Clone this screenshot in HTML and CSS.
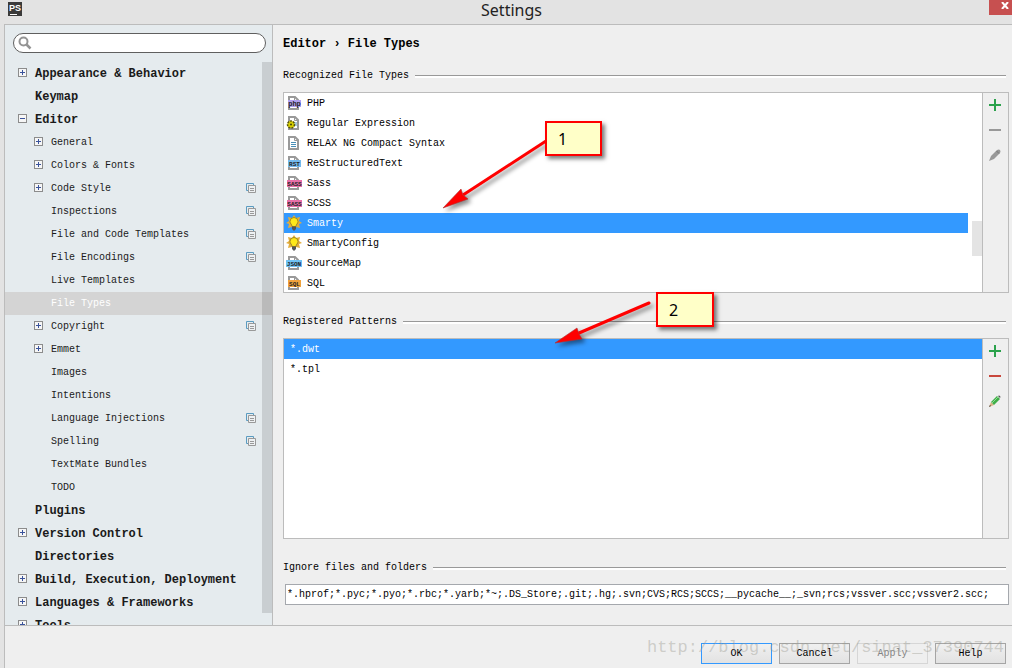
FILE: index.html
```html
<!DOCTYPE html>
<html lang="en">
<head>
  <meta charset="UTF-8">
  <meta name="viewport" content="width=device-width, initial-scale=1.0">
  <title>Settings</title>
  <link rel="stylesheet" href="styles.css">
</head>
<body>

  <svg class="defs" width="0" height="0" aria-hidden="true">
    <symbol id="doc" viewBox="0 0 16 16">
      <path d="M3 2h6l3 3v9H3z" fill="#fff" stroke="#999" stroke-width="2"/>
      <path d="M8.500 1v4.500h4" fill="none" stroke="#999"/>
    </symbol>
    <symbol id="shared" viewBox="0 0 10 10">
      <path d="M2.500 7.500h-2v-7h7v2" fill="none" stroke="#5b9bc0"/>
      <path d="M2.500 2.500h7v7h-7z" fill="#eef1f3" stroke="#999"/>
      <path d="M4 5.500h4M4 7.500h4" stroke="#999"/>
    </symbol>
    <symbol id="bulb" viewBox="0 0 16 16">
      <path d="M8 0l2 3 4-1-1 4 3 2-3 1 1 4-4-1H6l-4 1 1-4-3-1 3-2-1-4 4 1z" fill="#e3ad3d"/>
      <path d="M8 2.500a4 4 0 0 0-4 4c0 2 2 3 2 5h4c0-2 2-3 2-5a4 4 0 0 0-4-4z" fill="#ffe81a" stroke="#8c7621" stroke-width=".8"/>
      <path d="M6 11.500h4v3H9v1H7v-1H6z" fill="#555"/>
    </symbol>
    <symbol id="plus" viewBox="0 0 12 12">
      <path d="M6 0v12M0 6h12" stroke="#2ba24c" stroke-width="2"/>
    </symbol>
    <symbol id="minus" viewBox="0 0 12 12">
      <path d="M0 6h12" stroke="currentColor" stroke-width="2"/>
    </symbol>
  </svg>

  <header class="titlebar">
    <svg class="app-icon" viewBox="0 0 14 14" aria-hidden="true">
      <rect width="14" height="14" fill="#3a3a3a"/>
      <text x="1" y="9" class="app-letters">PS</text>
      <path d="M2 12.500h7" stroke="#fff"/>
    </svg>
    <h1>Settings</h1>
    <button class="close" aria-label="Close">
      <svg width="8" height="7" viewBox="0 0 8 7"><path d="M1 0l6 7M7 0L1 7" stroke="#fff" stroke-width="2"/></svg>
    </button>
  </header>

  <div class="window">
    <div class="columns">
      <aside class="sidebar">
        <label class="search">
          <svg width="14" height="14" viewBox="0 0 14 14" aria-hidden="true">
            <circle cx="5.500" cy="5.500" r="4" fill="none" stroke="#949494" stroke-width="2"/>
            <path d="M8.500 8.500l4 4" stroke="#949494" stroke-width="2.500"/>
          </svg>
          <input type="text" aria-label="Search settings">
        </label>

        <div class="tree-wrap">
          <ul class="tree">
            <li class="row top"><button class="toggle" aria-label="Expand"></button><span>Appearance &amp; Behavior</span></li>
            <li class="row top"><i class="spacer"></i><span>Keymap</span></li>
            <li class="row top"><button class="toggle open" aria-label="Collapse"></button><span>Editor</span></li>
            <li class="row"><button class="toggle" aria-label="Expand"></button><span>General</span></li>
            <li class="row"><button class="toggle" aria-label="Expand"></button><span>Colors &amp; Fonts</span></li>
            <li class="row"><button class="toggle" aria-label="Expand"></button><span>Code Style</span><svg class="shared"><use href="#shared"/></svg></li>
            <li class="row"><i class="spacer"></i><span>Inspections</span><svg class="shared"><use href="#shared"/></svg></li>
            <li class="row"><i class="spacer"></i><span>File and Code Templates</span><svg class="shared"><use href="#shared"/></svg></li>
            <li class="row"><i class="spacer"></i><span>File Encodings</span><svg class="shared"><use href="#shared"/></svg></li>
            <li class="row"><i class="spacer"></i><span>Live Templates</span></li>
            <li class="row active"><i class="spacer"></i><span>File Types</span></li>
            <li class="row"><button class="toggle" aria-label="Expand"></button><span>Copyright</span><svg class="shared"><use href="#shared"/></svg></li>
            <li class="row"><button class="toggle" aria-label="Expand"></button><span>Emmet</span></li>
            <li class="row"><i class="spacer"></i><span>Images</span></li>
            <li class="row"><i class="spacer"></i><span>Intentions</span></li>
            <li class="row"><i class="spacer"></i><span>Language Injections</span><svg class="shared"><use href="#shared"/></svg></li>
            <li class="row"><i class="spacer"></i><span>Spelling</span><svg class="shared"><use href="#shared"/></svg></li>
            <li class="row"><i class="spacer"></i><span>TextMate Bundles</span></li>
            <li class="row"><i class="spacer"></i><span>TODO</span></li>
            <li class="row top"><i class="spacer"></i><span>Plugins</span></li>
            <li class="row top"><button class="toggle" aria-label="Expand"></button><span>Version Control</span></li>
            <li class="row top"><i class="spacer"></i><span>Directories</span></li>
            <li class="row top"><button class="toggle" aria-label="Expand"></button><span>Build, Execution, Deployment</span></li>
            <li class="row top"><button class="toggle" aria-label="Expand"></button><span>Languages &amp; Frameworks</span></li>
            <li class="row top"><button class="toggle" aria-label="Expand"></button><span>Tools</span></li>
          </ul>
          <div class="tree-thumb"></div>
        </div>
      </aside>

      <main class="content">
        <h2 class="crumbs">Editor › File Types</h2>

        <h3 class="legend">Recognized File Types</h3>
        <div class="panel">
          <ul class="list types">
            <li>
              <svg class="icon" viewBox="0 0 16 16"><use href="#doc"/><rect x="2" y="5" width="13" height="7" fill="#b1a0f0"/><text x="8.500" y="10.500" class="tag php">php</text></svg>
              PHP
            </li>
            <li>
              <svg class="icon" viewBox="0 0 16 16"><use href="#doc"/><path d="M8 8h3M8 10h3" stroke="#4a90b8"/><circle cx="5" cy="9.500" r="3.500" fill="#d8d000" stroke="#55520a" stroke-width="1.500" stroke-dasharray="2 1"/><circle cx="5" cy="9.500" r="1" fill="#44420a"/></svg>
              Regular Expression
            </li>
            <li>
              <svg class="icon" viewBox="0 0 16 16"><use href="#doc"/><path d="M5 7.500h5M5 9.500h5M5 11.500h5" stroke="#4a90b8"/></svg>
              RELAX NG Compact Syntax
            </li>
            <li>
              <svg class="icon" viewBox="0 0 16 16"><use href="#doc"/><rect x="2" y="5" width="13" height="7" fill="#73b9ee"/><text x="8.500" y="11" class="tag">RST</text></svg>
              ReStructuredText
            </li>
            <li>
              <svg class="icon" viewBox="0 0 16 16"><use href="#doc"/><rect x="1" y="5" width="15" height="7" fill="#e86fa8"/><text x="8.500" y="11" class="tag">SASS</text></svg>
              Sass
            </li>
            <li>
              <svg class="icon" viewBox="0 0 16 16"><use href="#doc"/><rect x="1" y="5" width="15" height="7" fill="#e86fa8"/><text x="8.500" y="11" class="tag">SASS</text></svg>
              SCSS
            </li>
            <li class="selected"><svg class="icon"><use href="#bulb"/></svg>Smarty</li>
            <li><svg class="icon"><use href="#bulb"/></svg>SmartyConfig</li>
            <li>
              <svg class="icon" viewBox="0 0 16 16"><use href="#doc"/><rect y="5" width="16" height="7" fill="#6fc3f5"/><text x="8" y="11" class="tag">JSON</text></svg>
              SourceMap
            </li>
            <li>
              <svg class="icon" viewBox="0 0 16 16"><use href="#doc"/><rect x="2" y="5" width="13" height="7" fill="#f0a23c"/><text x="8.500" y="11" class="tag">SQL</text></svg>
              SQL
            </li>
          </ul>
          <div class="track"><div class="thumb"></div></div>
          <div class="tools">
            <button aria-label="Add type"><svg><use href="#plus"/></svg></button>
            <button class="muted" aria-label="Remove type"><svg><use href="#minus"/></svg></button>
            <button aria-label="Edit type"><svg viewBox="0 0 12 12"><path d="M0 12l2-5 6-6q2-1 3 0t0 3L5 10z" fill="#999"/><path d="M7.500 2l2.500 2.500" stroke="#777"/></svg></button>
          </div>
        </div>

        <h3 class="legend">Registered Patterns</h3>
        <div class="panel">
          <ul class="list patterns">
            <li class="selected">*.dwt</li>
            <li>*.tpl</li>
          </ul>
          <div class="tools">
            <button aria-label="Add pattern"><svg><use href="#plus"/></svg></button>
            <button class="danger" aria-label="Remove pattern"><svg><use href="#minus"/></svg></button>
            <button aria-label="Edit pattern"><svg viewBox="0 0 12 12"><path d="M0 12l2-5 3 3z" fill="#d9b184"/><path d="M0 12l1-2 1 1z" fill="#333"/><path d="M2 7l6-6 3 3-6 6z" fill="#3fae49"/><path d="M3 8l6-6" stroke="#8fdc90"/><path d="M9 1q1-1 2 0t0 2z" fill="#555"/></svg></button>
          </div>
        </div>

        <h3 class="legend"><label for="ignore">Ignore files and folders</label></h3>
        <input class="ignore" id="ignore" type="text" value="*.hprof;*.pyc;*.pyo;*.rbc;*.yarb;*~;.DS_Store;.git;.hg;.svn;CVS;RCS;SCCS;__pycache__;_svn;rcs;vssver.scc;vssver2.scc;">
      </main>
    </div>

    <footer class="footer">
      <button class="btn primary">OK</button>
      <button class="btn">Cancel</button>
      <button class="btn" disabled>Apply</button>
      <button class="btn">Help</button>
      <div class="watermark">http://blog.csdn.net/sinat_37390744</div>
    </footer>
  </div>

  <!-- callouts drawn over the lists -->
  <svg class="arrows" width="740" height="400" aria-hidden="true">
    <g fill="#f00" stroke="#f00">
      <path d="M546 141L463 195" stroke-width="3"/>
      <path d="M443 208l18-19 2 6 5 4z" stroke="#a33" stroke-width=".6"/>
      <path d="M649 303l-70 30" stroke-width="3" stroke-linecap="round"/>
      <path d="M555 343l22-15 2 6 3 5z" stroke="#a33" stroke-width=".6"/>
    </g>
  </svg>
  <div class="note note-one">1</div>
  <div class="note note-two">2</div>

</body>
</html>
```
FILE: styles.css
```css
* {
  box-sizing: border-box;
}

body {
  margin: 0;
  height: 100vh;
  display: flex;
  flex-direction: column;
  position: relative;
  overflow: hidden;
  background: #e3e3e3;
  color: #000;
  font-family: "Liberation Mono", monospace;
  font-size: 10px;
}

ul {
  margin: 0;
  padding: 0;
  list-style: none;
}

button, input {
  font: inherit;
  color: inherit;
}

svg {
  flex: none;
}

.defs {
  position: absolute;
}

/* Title bar */
.titlebar {
  display: flex;
  align-items: flex-start;
  justify-content: space-between;
  height: 24px;
  padding-left: 8px;
}

.app-icon {
  width: 14px;
  height: 14px;
  margin-top: 2px;
}

.app-letters {
  font: bold 9px "Liberation Sans", sans-serif;
  fill: #fff;
}

.titlebar h1 {
  margin: 0;
  padding-left: 12px;
  font: 16px/20px "Noto Sans", sans-serif;
  color: #222;
}

.close {
  display: flex;
  justify-content: flex-end;
  width: 23px;
  height: 15px;
  padding: 2px 3px;
  border: none;
  background: #c75050;
}

/* Window */
.window {
  flex: 1;
  min-height: 0;
  display: flex;
  flex-direction: column;
  margin-left: 4px;
  border-top: 1px solid #bcbcbc;
  border-left: 1px solid #bcbcbc;
  background: #efefef;
}

.columns {
  flex: 1;
  min-height: 0;
  display: flex;
}

/* Sidebar */
.sidebar {
  width: 268px;
  flex: none;
  display: flex;
  flex-direction: column;
  border-right: 1px solid #bcbcbc;
  background: #e5ebee;
}

.search {
  display: flex;
  align-items: center;
  flex: none;
  height: 20px;
  margin: 8px 6px 9px 8px;
  padding: 0 8px 0 4px;
  border: 1px solid #5f5f5f;
  border-radius: 10px;
  background: #fff;
}

.search input {
  flex: 1;
  min-width: 0;
  padding: 0 4px;
  border: none;
  outline: none;
  background: none;
}

.tree-wrap {
  flex: 1;
  min-height: 0;
  position: relative;
  overflow: hidden;
}

.tree-thumb {
  position: absolute;
  top: 0;
  right: 0;
  bottom: 12px;
  width: 10px;
  background: rgba(0, 0, 0, 0.12);
}

.row {
  display: flex;
  align-items: center;
  gap: 8px;
  height: 23px;
  padding: 0 16px 0 29px;
  color: #1a1a1a;
}

.row.top {
  padding-left: 13px;
  font-size: 12px;
  font-weight: bold;
}

.row.active {
  background: #d4d4d4;
  color: #fff;
}

.toggle, .spacer {
  width: 9px;
  height: 9px;
  flex: none;
  margin-bottom: 2px;
}

.toggle {
  padding: 0;
  border: 1px solid #8c8c8c;
  background:
    linear-gradient(#3a539b, #3a539b) center / 5px 1px no-repeat,
    linear-gradient(#3a539b, #3a539b) center / 1px 5px no-repeat,
    #f6f6f6;
}

.toggle.open {
  background:
    linear-gradient(#3a539b, #3a539b) center / 5px 1px no-repeat,
    #f6f6f6;
}

.shared {
  width: 10px;
  height: 10px;
  margin: 0 0 1px auto;
}

/* Content */
.content {
  flex: 1;
  min-width: 0;
  display: flex;
  flex-direction: column;
  padding: 9px 3px 20px 10px;
}

.crumbs {
  margin: 0;
  font-size: 12px;
  line-height: 20px;
}

.legend {
  display: flex;
  align-items: center;
  gap: 6px;
  margin: 21px 3px 8px 0;
  font-size: 10px;
  font-weight: normal;
  line-height: 16px;
}

.crumbs + .legend {
  margin-top: 14px;
}

.legend::after {
  content: "";
  flex: 1;
  height: 2px;
  border-top: 1px solid #999;
  background: #fff;
}

.panel {
  flex: 1 1 0;
  min-height: 0;
  display: flex;
  border: 1px solid #bcbcbc;
  background: #fff;
}

.list {
  flex: 1;
  min-width: 0;
  overflow: hidden;
}

.list li {
  display: flex;
  gap: 5px;
  height: 20px;
  padding: 0 2px;
  line-height: 22px;
}

.patterns li {
  padding-left: 6px;
}

.list .selected {
  background: #3399ff;
  color: #fff;
}

.icon {
  width: 16px;
  height: 16px;
  margin-top: 2px;
}

.tag {
  font-size: 6px;
  font-weight: bold;
  line-height: 1;
  text-anchor: middle;
  fill: #222;
}

.tag.php {
  font-size: 7px;
}

.track {
  width: 14px;
  padding: 128px 0 0 4px;
}

.thumb {
  height: 35px;
  background: #e4e4e4;
}

.tools {
  width: 26px;
  display: flex;
  flex-direction: column;
  gap: 1px;
  border-left: 1px solid #bcbcbc;
  background: #efefef;
}

.tools button {
  display: flex;
  align-items: center;
  justify-content: center;
  width: 24px;
  height: 24px;
  padding: 0;
  border: none;
  background: none;
}

.tools svg {
  width: 12px;
  height: 12px;
}

.tools .muted {
  color: #999;
}

.tools .danger {
  color: #c9473c;
}

.ignore {
  height: 21px;
  margin-left: 2px;
  padding: 0 1px;
  border: 1px solid #a5a8ad;
  background: #fff;
}

/* Footer */
.footer {
  display: flex;
  justify-content: flex-end;
  gap: 7px;
  position: relative;
  padding: 17px 6px 4px;
  border-top: 1px solid #bcbcbc;
}

.btn {
  width: 71px;
  height: 21px;
  padding: 0;
  border: 1px solid #a5a5a5;
  background: linear-gradient(#f0f0f0, #e2e2e2);
}

.btn.primary {
  border-color: #3399ff;
}

.btn:disabled {
  border-color: #d6d6d6;
  background: #efefef;
  color: #838383;
}

.watermark {
  position: absolute;
  right: 8px;
  top: 12px;
  font-size: 17px;
  line-height: 20px;
  color: rgba(150, 150, 140, 0.4);
  pointer-events: none;
}

/* Callouts */
.arrows {
  position: absolute;
  top: 0;
  left: 0;
  filter: drop-shadow(3px 3px 2px rgba(0, 0, 0, 0.45));
  pointer-events: none;
}

.note {
  position: absolute;
  width: 57px;
  height: 35px;
  padding-left: 11px;
  border: 2px solid #f00;
  background: #ffffc8;
  box-shadow: 3px 3px 4px rgba(0, 0, 0, 0.5);
  font: 16px/32px "Noto Sans", sans-serif;
}

.note-one {
  left: 545px;
  top: 121px;
}

.note-two {
  left: 656px;
  top: 292px;
  width: 58px;
}
```
